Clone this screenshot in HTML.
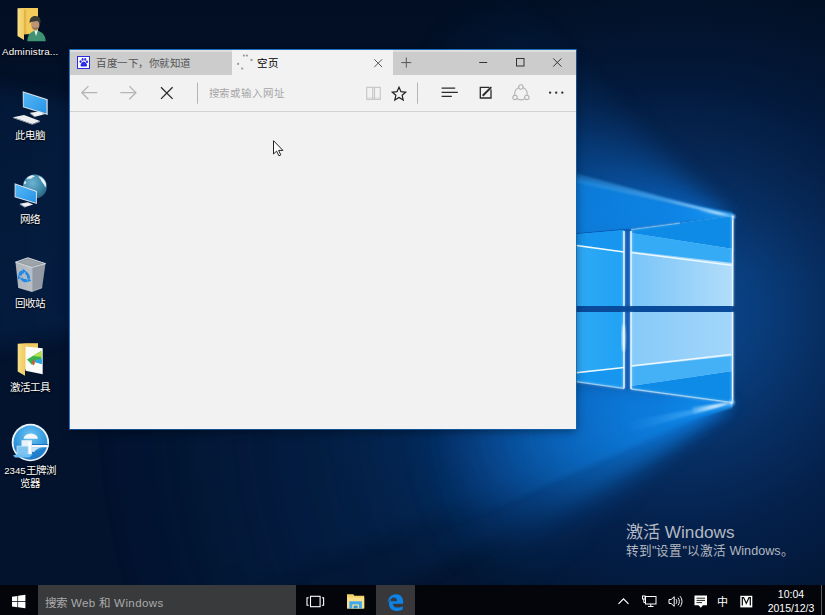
<!DOCTYPE html>
<html lang="zh-CN">
<head>
<meta charset="utf-8">
<title>Windows 10 Desktop - Edge</title>
<style>
*{box-sizing:border-box;margin:0;padding:0}
html,body{width:825px;height:615px;overflow:hidden;background:#03132e;font-family:"Liberation Sans",sans-serif;}
#desk{position:absolute;left:0;top:0;width:825px;height:615px;overflow:hidden}
#wall{position:absolute;left:0;top:0;width:825px;height:615px}
/* desktop icons */
.lbl{position:absolute;left:-4.8px;width:70px;text-align:center;color:#fff;font-size:10.500px;letter-spacing:.2px;line-height:13.400px;white-space:nowrap;text-shadow:0 1px 1.500px rgba(0,0,0,.9),0 0 2px rgba(0,0,0,.8)}
/* edge window */
#edge{position:absolute;left:70px;top:50px;width:506px;height:379px;background:#f2f2f2;box-shadow:-1px 0 0 0 #1a78cc,0 -1px 0 0 #1a6fc0,0 0 0 1px rgba(22,100,180,.75),0 2px 9px rgba(0,0,0,.45)}
#tabs{position:absolute;left:0;top:0;width:506px;height:25px;background:#cccccc;border-top:2px solid #dedede}
.tab{position:absolute;top:-2px;height:25px;font-size:10.5px;letter-spacing:.5px;line-height:25px;color:#555;white-space:nowrap}
.tt{position:absolute;top:0.5px}
#tab1{left:0;width:162px}
#tab2{left:162px;width:160.500px;background:#f2f2f2;color:#000}
#tab2 .tt{left:25.300px !important}
#tool{position:absolute;left:0;top:25px;width:506px;height:37px;background:#f2f2f2;border-bottom:1px solid #d2d2d2}
#addr{position:absolute;left:138.600px;top:10.500px;font-size:10.5px;letter-spacing:.85px;color:#a6a6a6;line-height:14px;white-space:nowrap}
/* taskbar */
#task{position:absolute;left:0;top:585px;width:825px;height:30px;background:#03050a}
#search{position:absolute;left:44.500px;top:1.500px;height:30px;color:#ababab;font-size:11.500px;letter-spacing:.4px;line-height:33px;white-space:nowrap}
#ime{position:absolute;left:717px;top:10px;color:#fff;font-size:11px;line-height:14px}
#clock{position:absolute;left:761px;top:1.500px;width:60px;text-align:center;color:#fff;font-size:10.500px;line-height:14.200px;white-space:nowrap}
#act1{position:absolute;left:626px;top:521px;color:#b3b8c0;font-size:17.200px;line-height:22px;white-space:nowrap}
#act2{position:absolute;left:626px;top:542.500px;color:#b3b8c0;font-size:12.600px;line-height:16px;white-space:nowrap}
</style>
</head>
<body>
<div id="desk">
<svg id="wall" width="825" height="615" viewBox="0 0 825 615">
  <defs>
    <radialGradient id="glow" gradientUnits="userSpaceOnUse" cx="678" cy="312" r="378"><stop offset="0" stop-color="#0b4a92"/><stop offset="0.2" stop-color="#093e7e"/><stop offset="0.4" stop-color="#072d60"/><stop offset="0.6" stop-color="#041f49"/><stop offset="0.85" stop-color="#031735"/><stop offset="1" stop-color="#03132e"/></radialGradient>
    <linearGradient id="topdark" x1="0" y1="0" x2="0" y2="1">
      <stop offset="0" stop-color="#010814" stop-opacity="0.42"/>
      <stop offset="0.2" stop-color="#010814" stop-opacity="0.17"/>
      <stop offset="0.45" stop-color="#010814" stop-opacity="0"/>
    </linearGradient>
    <radialGradient id="fanW" gradientUnits="userSpaceOnUse" cx="733" cy="216.5" r="360"><stop offset="0.00" stop-color="#0c70d6" stop-opacity="0.190"/><stop offset="0.10" stop-color="#0c70d6" stop-opacity="0.165"/><stop offset="0.20" stop-color="#0c70d6" stop-opacity="0.141"/><stop offset="0.30" stop-color="#0c70d6" stop-opacity="0.117"/><stop offset="0.40" stop-color="#0c70d6" stop-opacity="0.095"/><stop offset="0.50" stop-color="#0c70d6" stop-opacity="0.075"/><stop offset="0.60" stop-color="#0c70d6" stop-opacity="0.055"/><stop offset="0.70" stop-color="#0c70d6" stop-opacity="0.037"/><stop offset="0.80" stop-color="#0c70d6" stop-opacity="0.022"/><stop offset="0.90" stop-color="#0c70d6" stop-opacity="0.008"/><stop offset="1.00" stop-color="#0c70d6" stop-opacity="0.000"/></radialGradient>
    <radialGradient id="fanWL" gradientUnits="userSpaceOnUse" cx="731.5" cy="402.8" r="330"><stop offset="0.00" stop-color="#0c70d6" stop-opacity="0.280"/><stop offset="0.10" stop-color="#0c70d6" stop-opacity="0.239"/><stop offset="0.20" stop-color="#0c70d6" stop-opacity="0.200"/><stop offset="0.30" stop-color="#0c70d6" stop-opacity="0.164"/><stop offset="0.40" stop-color="#0c70d6" stop-opacity="0.130"/><stop offset="0.50" stop-color="#0c70d6" stop-opacity="0.099"/><stop offset="0.60" stop-color="#0c70d6" stop-opacity="0.071"/><stop offset="0.70" stop-color="#0c70d6" stop-opacity="0.046"/><stop offset="0.80" stop-color="#0c70d6" stop-opacity="0.025"/><stop offset="0.90" stop-color="#0c70d6" stop-opacity="0.009"/><stop offset="1.00" stop-color="#0c70d6" stop-opacity="0.000"/></radialGradient>
    <radialGradient id="fanFar" gradientUnits="userSpaceOnUse" cx="731.5" cy="402.8" r="640"><stop offset="0.00" stop-color="#0a58b4" stop-opacity="0.280"/><stop offset="0.10" stop-color="#0a58b4" stop-opacity="0.247"/><stop offset="0.20" stop-color="#0a58b4" stop-opacity="0.214"/><stop offset="0.30" stop-color="#0a58b4" stop-opacity="0.183"/><stop offset="0.40" stop-color="#0a58b4" stop-opacity="0.152"/><stop offset="0.50" stop-color="#0a58b4" stop-opacity="0.122"/><stop offset="0.60" stop-color="#0a58b4" stop-opacity="0.093"/><stop offset="0.70" stop-color="#0a58b4" stop-opacity="0.066"/><stop offset="0.80" stop-color="#0a58b4" stop-opacity="0.041"/><stop offset="0.90" stop-color="#0a58b4" stop-opacity="0.018"/><stop offset="1.00" stop-color="#0a58b4" stop-opacity="0.000"/></radialGradient>
    <radialGradient id="fanFarU" gradientUnits="userSpaceOnUse" cx="733" cy="216.5" r="1100"><stop offset="0.00" stop-color="#0a4c9c" stop-opacity="0.420"/><stop offset="0.10" stop-color="#0a4c9c" stop-opacity="0.378"/><stop offset="0.20" stop-color="#0a4c9c" stop-opacity="0.336"/><stop offset="0.30" stop-color="#0a4c9c" stop-opacity="0.294"/><stop offset="0.40" stop-color="#0a4c9c" stop-opacity="0.252"/><stop offset="0.50" stop-color="#0a4c9c" stop-opacity="0.210"/><stop offset="0.60" stop-color="#0a4c9c" stop-opacity="0.168"/><stop offset="0.70" stop-color="#0a4c9c" stop-opacity="0.126"/><stop offset="0.80" stop-color="#0a4c9c" stop-opacity="0.084"/><stop offset="0.90" stop-color="#0a4c9c" stop-opacity="0.042"/><stop offset="1.00" stop-color="#0a4c9c" stop-opacity="0.000"/></radialGradient>
    <radialGradient id="fanN" gradientUnits="userSpaceOnUse" cx="733" cy="216.5" r="430"><stop offset="0.00" stop-color="#0e88ea" stop-opacity="1.000"/><stop offset="0.10" stop-color="#0e88ea" stop-opacity="0.944"/><stop offset="0.20" stop-color="#0e88ea" stop-opacity="0.885"/><stop offset="0.30" stop-color="#0e88ea" stop-opacity="0.822"/><stop offset="0.40" stop-color="#0e88ea" stop-opacity="0.755"/><stop offset="0.50" stop-color="#0e88ea" stop-opacity="0.683"/><stop offset="0.60" stop-color="#0e88ea" stop-opacity="0.604"/><stop offset="0.70" stop-color="#0e88ea" stop-opacity="0.516"/><stop offset="0.80" stop-color="#0e88ea" stop-opacity="0.413"/><stop offset="0.90" stop-color="#0e88ea" stop-opacity="0.282"/><stop offset="1.00" stop-color="#0e88ea" stop-opacity="0.000"/></radialGradient>
    <radialGradient id="fanNL" gradientUnits="userSpaceOnUse" cx="731.5" cy="402.8" r="315"><stop offset="0.00" stop-color="#0e88ea" stop-opacity="0.970"/><stop offset="0.10" stop-color="#0e88ea" stop-opacity="0.828"/><stop offset="0.20" stop-color="#0e88ea" stop-opacity="0.694"/><stop offset="0.30" stop-color="#0e88ea" stop-opacity="0.568"/><stop offset="0.40" stop-color="#0e88ea" stop-opacity="0.451"/><stop offset="0.50" stop-color="#0e88ea" stop-opacity="0.343"/><stop offset="0.60" stop-color="#0e88ea" stop-opacity="0.245"/><stop offset="0.70" stop-color="#0e88ea" stop-opacity="0.159"/><stop offset="0.80" stop-color="#0e88ea" stop-opacity="0.087"/><stop offset="0.90" stop-color="#0e88ea" stop-opacity="0.031"/><stop offset="1.00" stop-color="#0e88ea" stop-opacity="0.000"/></radialGradient>
    <radialGradient id="ridG" gradientUnits="userSpaceOnUse" cx="733" cy="216.5" r="230">
      <stop offset="0" stop-color="#ffffff" stop-opacity="1"/>
      <stop offset="0.12" stop-color="#c9eaff" stop-opacity=".95"/>
      <stop offset="0.3" stop-color="#5cb8f8" stop-opacity=".65"/>
      <stop offset="1" stop-color="#2a9cf5" stop-opacity="0"/>
    </radialGradient>
    <radialGradient id="ridGL" gradientUnits="userSpaceOnUse" cx="731.5" cy="402.8" r="110">
      <stop offset="0" stop-color="#ffffff" stop-opacity="1"/>
      <stop offset="0.15" stop-color="#c9eaff" stop-opacity=".95"/>
      <stop offset="0.35" stop-color="#5cb8f8" stop-opacity=".55"/>
      <stop offset="1" stop-color="#2a9cf5" stop-opacity="0"/>
    </radialGradient>
    <linearGradient id="paneRT" gradientUnits="userSpaceOnUse" x1="630" y1="0" x2="733" y2="0">
      <stop offset="0" stop-color="#78c4f8"/>
      <stop offset="1" stop-color="#b2ddfa"/>
    </linearGradient>
    <linearGradient id="paneRB" gradientUnits="userSpaceOnUse" x1="630" y1="0" x2="733" y2="0">
      <stop offset="0" stop-color="#86caf9"/>
      <stop offset="1" stop-color="#a3d6fa"/>
    </linearGradient>
    <linearGradient id="paneL" gradientUnits="userSpaceOnUse" x1="540" y1="0" x2="624" y2="0">
      <stop offset="0" stop-color="#3ab0f7"/>
      <stop offset="1" stop-color="#20a2f4"/>
    </linearGradient>
    <filter id="b3" color-interpolation-filters="sRGB" x="-20%" y="-20%" width="140%" height="140%"><feGaussianBlur stdDeviation="2.5"/></filter>
    <filter id="b8" color-interpolation-filters="sRGB" x="-20%" y="-20%" width="140%" height="140%"><feGaussianBlur stdDeviation="9"/></filter>
    <filter id="b1" color-interpolation-filters="sRGB" x="-20%" y="-20%" width="140%" height="140%"><feGaussianBlur stdDeviation="0.6"/></filter>
    <filter id="b15" color-interpolation-filters="sRGB" x="-20%" y="-20%" width="140%" height="140%"><feGaussianBlur stdDeviation="1.3"/></filter>
    <radialGradient id="flr" gradientUnits="userSpaceOnUse" cx="733" cy="216.5" r="36"><stop offset="0" stop-color="#fff" stop-opacity="1"/><stop offset=".4" stop-color="#e2f5ff" stop-opacity=".95"/><stop offset="1" stop-color="#8fd0fb" stop-opacity="0"/></radialGradient>
    <radialGradient id="flrL" gradientUnits="userSpaceOnUse" cx="731.5" cy="402.8" r="50"><stop offset="0" stop-color="#fff" stop-opacity="1"/><stop offset=".35" stop-color="#d6efff" stop-opacity=".85"/><stop offset="1" stop-color="#6cc0fa" stop-opacity="0"/></radialGradient>
    <clipPath id="clipL"><rect x="0" y="0" width="732.6" height="615"/></clipPath>
    <radialGradient id="nearU" gradientUnits="userSpaceOnUse" cx="733" cy="216.5" r="75"><stop offset="0" stop-color="#2aa0f4" stop-opacity="1"/><stop offset=".4" stop-color="#1390ee" stop-opacity=".8"/><stop offset="1" stop-color="#0f84e8" stop-opacity="0"/></radialGradient>
    <radialGradient id="nearL" gradientUnits="userSpaceOnUse" cx="731.5" cy="402.8" r="75"><stop offset="0" stop-color="#2aa0f4" stop-opacity="1"/><stop offset=".4" stop-color="#1390ee" stop-opacity=".8"/><stop offset="1" stop-color="#0f84e8" stop-opacity="0"/></radialGradient>
    <radialGradient id="spark">
      <stop offset="0" stop-color="#fff" stop-opacity="1"/>
      <stop offset="0.35" stop-color="#9ad4ff" stop-opacity=".6"/>
      <stop offset="1" stop-color="#3aa0f5" stop-opacity="0"/>
    </radialGradient>
  </defs>
  <rect width="825" height="615" fill="url(#glow)"/>
  <rect width="825" height="615" fill="url(#topdark)"/>
  <!-- beams -->
  <g filter="url(#b8)">
    <polygon points="733,216.5 277.5,280.5 273.5,239.0 273.4,197.2 277.0,155.7 284.4,114.6 295.5,74.4" fill="url(#fanW)"/>
    <polygon points="733,216.5 277.5,280.5 273.6,239.2 273.4,197.8 276.9,156.5 284.2,115.6 295.1,75.6 309.6,36.8" fill="url(#fanW)"/>
    <polygon points="733,216.5 277.5,280.5 273.6,239.4 273.4,198.2 276.9,157.0 284.0,116.4 294.8,76.5 309.1,37.8 326.8,0.5" fill="url(#fanW)"/>
    <polygon points="733,216.5 277.5,280.5 273.3,233.7 274.0,186.7 279.4,140.0 289.6,94.1 304.4,49.5 323.7,6.6 347.2,-34.0" fill="url(#fanW)"/>
    <polygon points="733,216.5 277.5,280.5 273.3,233.6 274.0,186.4 279.5,139.6 289.7,93.6 304.6,48.8 324.1,5.9 347.8,-34.9 375.5,-73.0" fill="url(#fanW)"/>
    <polygon points="733,216.5 277.5,280.5 273.3,233.4 274.0,186.2 279.5,139.3 289.8,93.1 304.8,48.3 324.4,5.3 348.2,-35.5 376.1,-73.7 407.7,-108.8" fill="url(#fanW)"/>
    <polygon points="731.5,402.8 276.0,338.8 271.9,384.7 272.4,430.9 277.5,476.7 287.2,521.9" fill="url(#fanWL)"/>
    <polygon points="731.5,402.8 276.0,338.8 271.9,383.5 272.2,428.5 276.9,473.2 286.0,517.2 299.2,560.1" fill="url(#fanWL)"/>
    <polygon points="731.5,402.8 276.0,338.8 271.9,382.7 272.1,426.9 276.6,470.8 285.2,514.1 297.9,556.4 314.6,597.2" fill="url(#fanWL)"/>
    <polygon points="731.5,402.8 276.0,338.8 272.0,382.2 272.1,425.7 276.3,469.1 284.6,511.9 296.9,553.6 313.2,594.1 333.1,632.8" fill="url(#fanWL)"/>
    <polygon points="731.5,402.8 276.0,338.8 271.9,382.7 272.1,426.9 276.6,470.8 285.2,514.1 297.9,556.4 314.6,597.2 335.2,636.3 359.4,673.2" fill="url(#fanWL)"/>
    <polygon points="731.5,402.8 276.0,338.8 271.9,383.2 272.2,427.8 276.8,472.1 285.6,515.8 298.6,558.5 315.7,599.6 336.7,639.0 361.5,676.1 389.7,710.6" fill="url(#fanWL)"/>
  </g>
  <polygon points="731.5,402.8 35.3,329.6 31.5,400.8 34.9,471.9 45.6,542.4 63.3,611.4 87.9,678.2 119.3,742.2" fill="url(#fanFar)" filter="url(#b8)"/>
  <polygon points="731.5,402.8 31.9,378.4 33.0,448.6 41.1,518.3 56.1,586.9 78.0,653.7" fill="url(#fanFar)" filter="url(#b8)"/>
  <polygon points="733,216.5 -153.3,372.8 -163.6,294.9 -167.0,216.5 -163.6,138.1 -153.3,60.2" fill="url(#fanFarU)" filter="url(#b8)"/>
  <polygon points="733,216.5 277.5,280.5 273.5,237.0 273.6,193.2 277.9,149.7 286.3,106.8" fill="url(#fanN)" filter="url(#b3)"/>
  <g clip-path="url(#clipL)"><polygon points="749,216.0 659.7,227.0 660.7,198.8" fill="url(#nearU)" filter="url(#b15)"/>
  <polygon points="747.5,403.3 658.2,392.3 661.0,428.1" fill="url(#nearL)" filter="url(#b15)"/></g>
  <polygon points="731.5,402.8 276.0,338.8 272.0,380.7 271.9,422.9 275.7,464.8 283.3,506.3 294.6,546.9 309.7,586.2 328.2,624.1 350.1,660.0" fill="url(#fanNL)" filter="url(#b8)" opacity="0.75"/>
  <polygon points="731.5,402.8 276.0,338.8 272.0,381.4 272.0,424.2 276.0,466.8 283.9,508.9 295.7,550.0 311.3,589.9" fill="url(#fanNL)" filter="url(#b3)" opacity="0.8"/>
  <!-- logo frame (gaps) -->
  <polygon points="500,240 624,229 631,229 733,216 732,403 631,389 624,389 500,372" fill="#0a59b4"/>
  <rect x="500" y="306" width="233" height="6" fill="#0a4a9a"/>
  <!-- left panes -->
  <polygon points="500,241 624,230 624,306 500,306" fill="url(#paneL)"/>
  <polygon points="500,312 624,312 624,388.5 500,371" fill="url(#paneL)"/>
  <!-- right panes -->
  <polygon points="631,229.5 733,216 732.6,306 631,306" fill="url(#paneRT)"/>
  <polygon points="631,312 732.6,312 732.6,402.6 631,389" fill="url(#paneRB)"/>
  <polygon points="631,229.5 733,216 733,249 631,233" fill="#0e8be6"/>
  <polygon points="631,233 733,249 733,263 631,251" fill="#35abf5"/>
  <polygon points="631,389 732.6,402.6 732.6,371 631,386" fill="#0e8be6"/>
  <polygon points="631,386 732.6,371 732.6,356 631,367" fill="#44b0f6"/>
  <polygon points="500,241 624,230 624,251 500,234" fill="#1696ee"/>
  <polygon points="500,371 624,388.5 624,368 500,381.5" fill="#1696ee"/>
  <!-- streaks -->
  <g filter="url(#b1)" stroke="#ecf8ff" stroke-width="1.7" fill="none">
    <line x1="500" y1="235" x2="624" y2="252"/>
    <line x1="631" y1="252.5" x2="733" y2="265.5"/>
    <line x1="500" y1="381" x2="624" y2="367.5"/>
    <line x1="631" y1="366" x2="731" y2="354.5"/>
  </g>
  <!-- edges -->
  <g filter="url(#b15)" stroke="#bfe6ff" stroke-width="2.8" fill="none" opacity=".45">
    <polyline points="624,306 624,231"/>
    <polyline points="624,312 624,388.5"/>
    <polyline points="624,388.5 500,371" stroke-opacity=".5"/>
    <polyline points="631,306 631,231"/>
    <polyline points="631,229.5 680,223" stroke-opacity=".3"/>
    <polyline points="732.8,217 732.6,306"/>
    <polyline points="732.6,312 732.6,402.6"/>
    <polyline points="731.5,402.6 631,389" stroke-opacity=".55"/>
    <polyline points="631,389 631,312"/>
  </g>
  <g filter="url(#b1)" stroke="#eaf7ff" stroke-width="1.5" fill="none">
    <polyline points="624,306 624,231"/>
    <polyline points="624,312 624,388.5"/>
    <polyline points="624,388.5 500,371" stroke-opacity=".5"/>
    <polyline points="631,306 631,231"/>
    <polyline points="631,229.5 680,223" stroke-opacity=".3"/>
    <polyline points="732.8,217 732.6,306"/>
    <polyline points="732.6,312 732.6,402.6"/>
    <polyline points="731.5,402.6 631,389" stroke-opacity=".55"/>
    <polyline points="631,389 631,312"/>
  </g>
  <ellipse cx="623.6" cy="338" rx="1.8" ry="14" fill="#fff" opacity=".7" filter="url(#b15)"/>
  <polygon points="733,216.5 508.2,167.9 511.3,155.4" fill="url(#ridG)" filter="url(#b15)"/>
  <polygon points="731.5,402.8 613.3,423.6 616.4,436.9" fill="url(#ridGL)" filter="url(#b15)"/>
  <polygon points="733,216.5 697.4,211.2 698.3,206.9" fill="url(#flr)" filter="url(#b15)"/>
  <polygon points="731.5,402.8 691.7,407.0 693.2,414.5" fill="url(#flrL)" filter="url(#b15)"/>
  <circle cx="733" cy="216.5" r="4" fill="url(#spark)"/>
  <circle cx="731.5" cy="402.8" r="5" fill="url(#spark)"/>
</svg>

<svg id="icons" width="70" height="500" viewBox="0 0 70 500" style="position:absolute;left:0;top:0">
  <defs>
    <linearGradient id="scr" x1="0" y1="0" x2="1" y2="1"><stop offset="0" stop-color="#55b8f6"/><stop offset="1" stop-color="#2893e6"/></linearGradient>
    <linearGradient id="fold" x1="0" y1="0" x2="1" y2="0"><stop offset="0" stop-color="#f9e08a"/><stop offset="1" stop-color="#f1cb5e"/></linearGradient>
    <radialGradient id="globe" cx=".4" cy=".35" r=".75"><stop offset="0" stop-color="#6db4d0"/><stop offset=".6" stop-color="#3c86a8"/><stop offset="1" stop-color="#235a78"/></radialGradient>
    <linearGradient id="bin" x1="0" y1="0" x2="1" y2="0"><stop offset="0" stop-color="#c3c8cc"/><stop offset="1" stop-color="#d2d6d9"/></linearGradient>
    <radialGradient id="b2345" cx=".5" cy=".3" r=".8"><stop offset="0" stop-color="#6cc4f4"/><stop offset=".6" stop-color="#2f95dc"/><stop offset="1" stop-color="#1b78c4"/></radialGradient>
  </defs>
  <!-- 1 Administrator folder with user -->
  <g>
    <path d="M22.600 8H38v26.200H22.600z" fill="#f2cb5b"/>
    <path d="M24 9.200l2.200 1.400v23.600H24z" fill="#e3b548"/>
    <path d="M17.500 8.300L23 8l1 1.200v30.700l-6.500-4z" fill="url(#fold)"/>
    <path d="M27.300 41.200c0-4.200 1.500-7.700 4.600-9.300l2.500-1.300h3.400l2.900 1.500c3.200 1.700 5 5 5 9.100z" fill="#3f9373"/>
    <path d="M34.300 30.600l1.700 5.600 1.900-5.600z" fill="#e6efec"/>
    <ellipse cx="35.300" cy="24.800" rx="4.200" ry="5.300" fill="#be9574"/>
    <path d="M32 26.500c.5 2 1.800 3.600 3.300 3.600s2.800-1.500 3.400-3.500c-2 1.600-4.700 1.500-6.700-.1z" fill="#9a7558"/>
    <path d="M29.800 23.600c-.8-5.200 2-7.700 5.700-7.600 3.900.1 5.700 2.800 4.900 6.800-.2 1.200-.5 1.700-.9 2.100-.2-2.400-.9-3.500-2.200-4-2.300.6-4.700.5-6.200 1.200-.6.300-1 .8-1.300 1.500z" fill="#3a3b36"/>
  </g>
  <!-- 2 This PC -->
  <g>
    <path d="M22.700 91.200l25 8.100v15.600l-24.800-7.600z" fill="#dfe3e6"/>
    <path d="M23.600 92.500l22.900 7.500v13.400l-22.900-7z" fill="url(#scr)"/>
    <path d="M30 112.800l9.500-1.400 5 2.800-9.500 2.600z" fill="#eef0f1"/>
    <path d="M30 112.800l5 4v.8l-5-4z" fill="#b9bec2"/>
    <path d="M13 117.200l11-2.300 16 6.200-7.700 2.800z" fill="#eceeef"/>
    <path d="M13 117.200l19.300 6.700v.9L13 118z" fill="#b5babe"/>
    <path d="M32.300 123.900l7.700-2.800v.9l-7.700 2.800z" fill="#9ea4a8"/>
  </g>
  <!-- 3 Network -->
  <g>
    <circle cx="34.900" cy="186.400" r="12" fill="url(#globe)"/>
    <path d="M28.500 177.500c2-1.600 4.600-2.200 6.400-1.600-.8 1.200-2.600 1.400-3.600 2.600-1 .9-2 .6-2.800-1zM38.500 176c2.600.8 5 2.600 6.500 5.200.9 2.200 1 3.400.2 4.500-1.400-.6-1.600-2.500-2.900-3.600-1.400-1.200-1.200-2.600-2.400-3.600-.9-.8-1.500-1.500-1.400-2.500zM24.500 181.500c.6-.6 1.600-.4 1.800.6.200 1.200-.8 2.100-1.900 2.400-.5-.9-.4-2.100.1-3z" fill="#e9f3f6" opacity=".9"/>
    <path d="M26.500 178.500c1.500-2 4.500-3.300 7-3.400-1 1.600-3 1.700-4.300 3.100-.9 1-1.800 1.400-2.700.3zM40.500 177c2.500 1.500 4.500 4 5.500 7 .3 1.600 0 2.800-.8 3.400-1-1.400-1-3-2.300-4.300-1.300-1.500-1.500-3.400-2.400-6.100z" fill="#f4fafb" opacity=".75"/>
    <path d="M14.600 183.300l22.300 7.800v13l-22.300-6.800z" fill="#dfe3e6"/>
    <path d="M15.500 184.600l20.400 7.100v11.100l-20.400-6.200z" fill="url(#scr)"/>
    <path d="M19.800 203.700l8-1.400 5.500 2.300-8.200 2.300z" fill="#eef0f1"/>
    <path d="M19.800 203.700l5.300 3.200v.8l-5.300-3.200z" fill="#b9bec2"/>
  </g>
  <!-- 4 Recycle bin -->
  <g>
    <path d="M15.500 262.200l16.400 5.100v24.300l-13.700-4.100z" fill="url(#bin)" opacity=".88"/>
    <path d="M31.900 267.300l13.600-3.700-3.400 24.200-10.200 3.800z" fill="#a3a9af" opacity=".9"/>
    <path d="M15.500 262.200l12.300-4.400 17.700 5.800-13.600 3.700z" fill="#8a9198"/>
    <path d="M18.600 262.300l9.300-3.300 13.500 4.500-9.500 2.500z" fill="#9da4aa"/>
    <path d="M15.500 262.200l12.300-4.400 17.700 5.800-13.600 3.700z" fill="none" stroke="#e3e7ea" stroke-width=".9" stroke-linejoin="round"/>
    <path d="M31.900 267.300v24.300" stroke="#dfe3e6" stroke-width=".7" opacity=".8"/>
    <path d="M18.200 287.500l13.700 4.100 10.200-3.800" stroke="#e6e9ec" stroke-width=".8" fill="none" opacity=".7"/>
    <g transform="translate(24.300 276.300) skewY(15)"><circle r="4.200" fill="none" stroke="#1f8ae8" stroke-width="3" stroke-dasharray="6.400 2.400" transform="rotate(-75)"/><path d="M-1.600 -7.300l3.800 2-3.200 2.200zM7 2.200l-3.300 2.600-.5-4zM-6.300 4.800l-.4-4.200 3.500 1.800z" fill="#1f8ae8"/></g>
  </g>
  <!-- 5 activation tools folder -->
  <g>
    <path d="M25 343.200H38v26H25z" fill="#f0cb60"/>
    <path d="M25.500 346.600l17.200 1.600v26l-17.200-3.500z" fill="#fbfbfa"/>
    <path d="M27 359.500l14-8.500 1 13-7-2-3 3z" fill="#3ab24a"/>
    <path d="M33 356l8.500-5 .5 6z" fill="#b7e04a"/>
    <path d="M35 360l7-1v5l-6.500-1.500z" fill="#2ca6e8"/>
    <path d="M32.200 361.500l2-2.500.5 5-1.500 1.500z" fill="#e8483a"/>
    <path d="M17.700 343.800l7.300-.6v32.600l-7.300-4.300z" fill="url(#fold)"/>
  </g>
  <!-- 6 2345 browser -->
  <g>
    <circle cx="30.400" cy="442.500" r="18.700" fill="#eef5fa"/>
    <circle cx="30.400" cy="442.500" r="16.900" fill="url(#b2345)"/>
    <path d="M13.600 446c1.500 7.900 8.400 13.700 16.800 13.700 8.300 0 15.200-5.700 16.800-13.500-5 3.500-11 5-17 5s-12-1.700-16.600-5.200z" fill="#1a74c4" opacity=".55"/>
    <path d="M23.700 438.800a7.100 5.300 0 0 1 14.200 0z" fill="#f4f8fb"/>
    <path d="M31.900 443.900h16.100l.3 1.100H31.900z" fill="#1d74c2"/>
    <path d="M31.900 445h16.500c.1.800.1 1.500 0 2.300H31.900z" fill="#f4f8fb"/>
    <path d="M32 447.300h9.500c-2.800.9-5.800 2.300-7.300 4.800l-2.200-.4z" fill="#dcebf6" opacity=".9"/>
    <path d="M21.500 440.200h10.400v14.200H21.500z" fill="#eaf2f9"/>
    <path d="M28.300 441.600h2.300v12.800h-2.300z" fill="#fbfdfe"/>
    <path d="M17 446.200h11.200v9H17z" fill="#7dc4f0" stroke="#d3e9f7" stroke-width=".7"/>
    <path d="M12.900 455.600l4.100-1.400h15.700l-3.200 3.300H15.200z" fill="#6dbff1"/>
  </g>
</svg>
<div class="lbl" style="top:45.200px;font-size:9.800px;letter-spacing:.15px">Administra...</div>
<div class="lbl" style="top:128.500px">此电脑</div>
<div class="lbl" style="top:212.500px">网络</div>
<div class="lbl" style="top:296.500px">回收站</div>
<div class="lbl" style="top:380.500px">激活工具</div>
<div class="lbl" style="top:463.500px"><span style="font-size:9.600px;letter-spacing:0">2345</span>王牌浏<br>览器</div>

<div id="edge">
  <div id="tabs">
    <div class="tab" id="tab1"><span class="tt" style="left:26.300px">百度一下，你就知道</span></div>
    <div class="tab" id="tab2"><span class="tt" style="left:188px;color:#000">空页</span></div>
  </div>
  <div id="tool"><div id="addr">搜索或输入网址</div></div>
  <svg id="chrome" width="506" height="62" viewBox="0 0 506 62" style="position:absolute;left:0;top:0">
    <!-- baidu favicon -->
    <rect x="7.5" y="6.5" width="12" height="12" fill="#fff" stroke="#2c2ce2" stroke-width="1"/>
    <g fill="#2c2ce2">
      <ellipse cx="10.6" cy="11.6" rx="1.1" ry="1.4"/>
      <ellipse cx="12.6" cy="9.4" rx="1" ry="1.3"/>
      <ellipse cx="15.2" cy="9.4" rx="1" ry="1.3"/>
      <ellipse cx="16.9" cy="11.8" rx="1.1" ry="1.4"/>
      <path d="M13.8 11.6c1.6 0 3.3 2.4 3.3 3.9 0 1.3-1.6 1-3.3 1s-3.3.3-3.3-1c0-1.5 1.700-3.900 3.300-3.900z"/>
    </g>
    <!-- spinner dots -->
    <g fill="#9a9a9a">
      <circle cx="173.900" cy="5.600" r="1.150"/><circle cx="176.900" cy="5.600" r="1.150"/>
      <circle cx="181.500" cy="10" r="1.150"/><circle cx="168.100" cy="13.900" r="1.150"/><circle cx="172.200" cy="18.600" r="1.150"/>
    </g>
    <!-- tab close, new tab -->
    <g stroke="#555" stroke-width="1" fill="none">
      <path d="M304.300 9.300l7.800 7.800M312.100 9.300l-7.800 7.800"/>
      <path d="M331.400 12.600h9.800M336.300 7.600v10"/>
    </g>
    <!-- window controls -->
    <g stroke="#333" stroke-width="1" fill="none">
      <path d="M409.200 12.500h8"/>
      <rect x="446.500" y="8.500" width="7.500" height="7.500"/>
      <path d="M483.200 8.400l8.200 8.200M491.400 8.400l-8.200 8.200"/>
    </g>
    <!-- back / forward -->
    <g stroke="#b4b4b4" stroke-width="1.300" fill="none">
      <path d="M27.400 42.700H11.800M18.400 36.100l-6.600 6.600 6.600 6.600"/>
      <path d="M50.300 42.700h15.600M59.300 36.100l6.600 6.600-6.600 6.600"/>
    </g>
    <!-- stop -->
    <path d="M91 37.300l11.600 11.600M102.600 37.300L91 48.900" stroke="#2b2b2b" stroke-width="1.300" fill="none"/>
    <!-- separators -->
    <path d="M127.500 32.500v21.200M347.500 32.500v21.200" stroke="#b5b5b5" stroke-width="1" fill="none"/>
    <!-- reading view (disabled) -->
    <g stroke="#c9c9c9" stroke-width="1.200" fill="none">
      <path d="M296.700 37.300h13.600v12.200h-13.600zM302.700 37.300v12.200M304.500 37.300v12.200"/>
      <path d="M296.700 48.100h13.600" stroke-width=".7"/>
    </g>
    <!-- star -->
    <path d="M329 36.600l2.200 4.900 5.200.5-3.900 3.500 1.150 5.150-4.650-2.700-4.650 2.700 1.150-5.150-3.900-3.500 5.200-.5z" stroke="#1e1e1e" stroke-width="1.350" fill="none" stroke-linejoin="miter" transform="translate(329 43.600) scale(.9) translate(-329 -43.600)"/>
    <!-- hub -->
    <path d="M371.600 38.100h13.600M371.600 42.300h16.200M371.600 46.400h10.200" stroke="#2b2b2b" stroke-width="1.200" fill="none"/>
    <!-- web note -->
    <g stroke="#2b2b2b" fill="none">
      <path d="M419.300 37.300h-9v10.700h10.700v-8.600" stroke-width="1.300"/>
      <path d="M412.700 45.700l8.600-8.600" stroke-width="2"/>
    </g>
    <!-- share (disabled) -->
    <g stroke="#b2b2b2" stroke-width="1.100" fill="#f2f2f2">
      <circle cx="450.900" cy="43.600" r="6.300" fill="none"/>
      <circle cx="450.900" cy="37" r="2.200"/>
      <circle cx="445" cy="47.400" r="2.200"/>
      <circle cx="456.800" cy="47.400" r="2.200"/>
    </g>
    <!-- more -->
    <g fill="#2b2b2b"><circle cx="480.100" cy="42.700" r="1.150"/><circle cx="486.200" cy="42.700" r="1.150"/><circle cx="492.300" cy="42.700" r="1.150"/></g>
  </svg>
</div>

<svg id="cursor" width="14" height="19" viewBox="-1 -1 14 19" style="position:absolute;left:272.200px;top:138.900px"><path d="M.5.700v13.300l3.100-2.900 2.300 4.700 1.900-.9-2.200-4.500h4.300z" fill="#fff" stroke="#222" stroke-width="1" stroke-linejoin="round"/></svg>
<div id="act1">激活 Windows</div>
<div id="act2">转到"设置"以激活 Windows。</div>

<div id="task">
  <svg width="825" height="30" viewBox="0 0 825 30" style="position:absolute;left:0;top:0">
    <rect x="38" y="0" width="258" height="30" fill="#393a3b"/>
    <rect x="376" y="0" width="39" height="30" fill="#38383b"/>
    <!-- start logo -->
    <g fill="#fff">
      <path d="M12 11.700l5.400-.75v5.250H12zM18.100 10.850l7.300-1.050v6.400h-7.300zM12 16.900h5.400v5.250l-5.400-.75zM18.100 16.900h7.300v6.400l-7.300-1.050z"/>
    </g>
    <!-- task view -->
    <g stroke="#fff" stroke-width="1.100" fill="none">
      <rect x="310.500" y="11.300" width="9.600" height="10.400"/>
      <path d="M308.700 12.800h-1.700v7.400h1.700M321.900 12.800h1.700v7.400h-1.700"/>
    </g>
    <!-- file explorer -->
    <g>
      <path d="M347 9.200h6.200l1.300 1.600h9.700v12.600H347z" fill="#f5d267"/>
      <path d="M347 12.500h17.200v10.900H347z" fill="#fbe08a"/>
      <path d="M349.300 16.300h12.600v7.100h-12.600z" fill="#3fa9f0"/>
      <path d="M352.300 19.400h6.600v4h-6.600z" fill="#fbe08a"/>
      <path d="M353.600 20.600h4v2.800h-4z" fill="#2a8fdc"/>
    </g>
    <!-- edge -->
    <path d="M387.600 18.300c.1-5.100 3.500-9 8.400-9 4.600 0 7.200 3.300 7.200 7.700v1.700h-10.400c.1 2.500 2 3.900 4.800 3.900 1.900 0 3.600-.5 5.100-1.400v3.300c-1.500.9-3.600 1.400-5.900 1.400-4.700 0-7.800-2.700-7.800-7.200 0-2.700 1.300-5 3.500-6.300-1.100 1.200-1.700 2.500-1.900 3.800h6.500c0-2.200-1.100-3.600-3.100-3.600-2.600 0-5.100 2-6.400 5.700z" fill="#0b84ea"/>
    <!-- tray chevron -->
    <path d="M618.500 18.900l5-5 5 5" stroke="#fff" stroke-width="1.200" fill="none"/>
    <!-- network -->
    <g stroke="#fff" stroke-width="1" fill="none">
      <rect x="645.500" y="11.500" width="10.500" height="7.500"/>
      <path d="M648 21.500h5.500M650.750 19v2.500"/>
      <rect x="642.500" y="11" width="2.600" height="3"/>
      <path d="M643.800 14v3.500h1.700"/>
    </g>
    <!-- volume -->
    <g stroke="#fff" stroke-width="1" fill="none">
      <path d="M669 14.500h2.200l3-2.800v9.600l-3-2.800H669z"/>
      <path d="M676 14.200c1 1.300 1 3.300 0 4.600M678 12.700c1.800 2.200 1.800 5.400 0 7.600M680 11.200c2.600 3.100 2.600 7.500 0 10.600"/>
    </g>
    <!-- action center -->
    <path d="M694.500 10.500h12.500v9.700h-4l-2.200 2.600-2.300-2.600h-4z" fill="#fff"/>
    <path d="M696.500 13.200h8.500M696.500 15.400h8.500M696.500 17.600h5.500" stroke="#0a0a0a" stroke-width=".9" fill="none"/>
    <!-- IME M box -->
    <rect x="740.300" y="10.800" width="12" height="11.600" fill="#fff"/>
    <path d="M742.300 20.600v-8h1.300l2.700 5.800 2.700-5.800h1.300v8" stroke="#000" stroke-width="1.200" fill="none" stroke-linejoin="miter"/>
    <!-- show desktop sep -->
    <path d="M821.500 0v30" stroke="#5a5a5a" stroke-width="1"/>
  </svg>
  <div id="search">搜索 Web 和 Windows</div>
  <div id="ime">中</div>
  <div id="clock"><span id="ck1">10:04</span><br><span id="ck2">2015/12/3</span></div>
</div>
</div>
</body>
</html>
